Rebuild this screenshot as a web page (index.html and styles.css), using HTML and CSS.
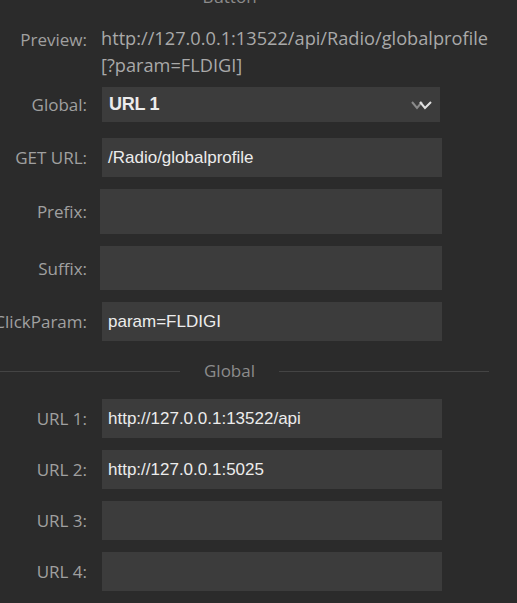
FILE: index.html
```html
<!DOCTYPE html>
<html>
<head>
<meta charset="utf-8">
<link rel="stylesheet" href="styles.css">
</head>
<body>
<div class="panel">
  <div class="sep sep-top"><span class="line left"></span><span class="sep-text">Button</span><span class="line right"></span></div>

  <div class="row row-preview">
    <div class="label">Preview:</div>
    <div class="preview">http://127.0.0.1:13522/api/Radio/globalprofile<br>[?param=FLDIGI]</div>
  </div>

  <div class="row row-select">
    <div class="label">Global:</div>
    <div class="select">
      <span class="select-text">URL 1</span>
      <svg class="chev" width="22" height="10" viewBox="0 0 22 10">
        <polyline points="1,2 6,8 11,2" fill="none" stroke="#8a8a8a" stroke-width="2"/>
        <polyline points="9,2 14,8 20,2" fill="none" stroke="#e0e0e0" stroke-width="2"/>
      </svg>
    </div>
  </div>

  <div class="row row-input">
    <div class="label">GET URL:</div>
    <div class="input">/Radio/globalprofile</div>
  </div>

  <div class="row row-tall">
    <div class="label">Prefix:</div>
    <div class="input tall"></div>
  </div>

  <div class="row row-tall">
    <div class="label">Suffix:</div>
    <div class="input tall"></div>
  </div>

  <div class="row row-input">
    <div class="label">ClickParam:</div>
    <div class="input">param=FLDIGI</div>
  </div>

  <div class="sep sep-global"><span class="line left"></span><span class="sep-text">Global</span><span class="line right"></span></div>

  <div class="row row-url first">
    <div class="label">URL 1:</div>
    <div class="input">http://127.0.0.1:13522/api</div>
  </div>
  <div class="row row-url">
    <div class="label">URL 2:</div>
    <div class="input">http://127.0.0.1:5025</div>
  </div>
  <div class="row row-url">
    <div class="label">URL 3:</div>
    <div class="input"></div>
  </div>
  <div class="row row-url">
    <div class="label">URL 4:</div>
    <div class="input"></div>
  </div>
</div>
</body>
</html>
```

FILE: styles.css
```css
html, body {
  margin: 0;
  padding: 0;
  background: #2b2b2b;
  overflow: hidden;
}

body {
  width: 517px;
  height: 603px;
}

.panel {
  margin-left: -31px;
  margin-top: -15px;
  width: 520px;
  display: flex;
  flex-direction: column;
  font-family: "Open Sans", "Noto Sans", sans-serif;
}

.sep {
  display: flex;
  align-items: center;
  height: 24px;
}

.sep .line {
  height: 1px;
  background: #444444;
  flex: 1 1 auto;
}

.sep .left {
  flex: 0 0 211px;
}

.sep .right {
  flex: 0 0 210px;
}

.sep-text {
  flex: 0 0 auto;
  width: 99px;
  text-align: center;
  color: #8c8c8c;
  font-size: 17px;
  line-height: 24px;
}

.sep-global {
  margin-top: 18px;
}

.row {
  display: grid;
  grid-template-columns: 118px 340px;
  column-gap: 15px;
  align-items: center;
}

.label {
  text-align: right;
  white-space: nowrap;
  color: #a0a0a0;
  font-size: 17px;
}

.row-preview {
  margin-top: 16px;
  align-items: start;
}

.row-preview .label {
  line-height: 27px;
  padding-top: 1px;
}

.preview {
  color: #a9a9a9;
  font-size: 18.2px;
  line-height: 27px;
  white-space: nowrap;
  margin-left: -1px;
}

.row-select {
  margin-top: 8px;
}

.select {
  width: 338px;
  height: 35px;
  background: #3c3c3c;
  display: flex;
  align-items: center;
  justify-content: space-between;
  box-sizing: border-box;
  padding: 0 7px 0 7px;
}

.select-text {
  font-family: "Liberation Sans", Arial, sans-serif;
  font-weight: bold;
  font-size: 18px;
  color: #ececec;
  letter-spacing: -0.3px;
}

.chev {
  display: block;
}

.input {
  height: 39px;
  background: #3c3c3c;
  box-sizing: border-box;
  padding: 0 6px;
  display: flex;
  align-items: center;
  font-family: "Liberation Sans", Arial, sans-serif;
  font-size: 17px;
  color: #ececec;
}

.row-input {
  margin-top: 12px;
}

.row-select + .row-input {
  margin-top: 16px;
}

.row-tall {
  margin-top: 12px;
}

.input.tall {
  height: 45px;
  margin-left: -2px;
  width: 342px;
}

.row-tall + .row-tall .input.tall {
  height: 44px;
}

.row-url {
  margin-top: 12px;
}

.row-url.first {
  margin-top: 16px;
}
```
